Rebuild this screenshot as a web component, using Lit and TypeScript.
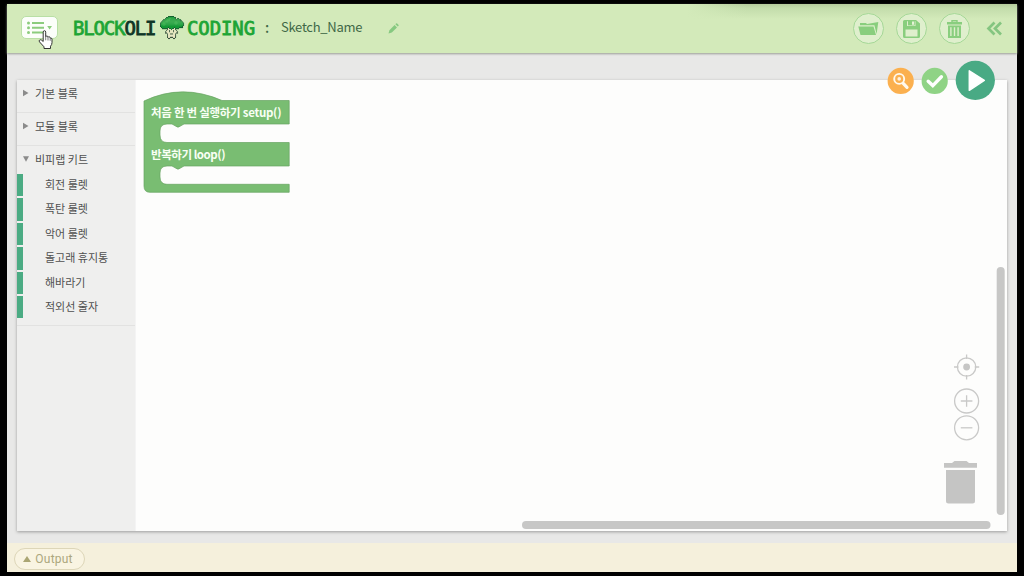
import { LitElement, html, css, svg } from "lit";
import { customElement, state } from "lit/decorators.js";

const KIT_ITEMS = ["회전 룰렛", "폭탄 룰렛", "악어 룰렛", "돌고래 휴지통", "해바라기", "적외선 줄자"];

const BROCCOLI = [
  "........dddddd..........",
  "......ddggggggdd........",
  ".....dgggGGggggd.dd.....",
  "...ddggGGGggggggdggdd...",
  "..dgggGGGGggggggggggdd..",
  ".dgggGGGgggggggGGgggggd.",
  "dggGGgggggggggGGGGgggggd",
  "dgGGGGgggggggggGGggggggd",
  "dggGGggggggggggggggggggd",
  "dgggggggggggggggggggggd.",
  ".dggggggdgggggdggggdddd.",
  "..dddddkwddgddwdddd.....",
  ".......kwwwdwwwk........",
  "......kwwkwwwkwwk.......",
  ".....kwwwkwwwkwwwk......",
  ".....kkwwwwwwwwwkk......",
  ".......kwwkkkwwk........",
  ".......kwwwwwwwk........",
  ".......kwwwwwwwk........",
  ".......kwwkkkwwk........",
  "........kk...kk.........",
];
const PIXEL: Record<string, string> = { k: "#35503c", d: "#12602f", g: "#149a36", G: "#24a942", w: "#e9e6c2" };

@customElement("app-root")
export class AppRoot extends LitElement {
  @state() private sketchName = "Sketch_Name";

  static styles = css`
    :host { display: block; width: 1024px; height: 576px; background: #000; overflow: hidden;
      font-family: "Noto Sans CJK KR", "Noto Sans", sans-serif; }
    * { box-sizing: border-box; }
    svg { display: block; flex: none; overflow: visible; }
    .frame { padding: 4px 7px; height: 576px; }
    .app { display: flex; flex-direction: column; height: 568px; background: #e8e8e7; }
    .header { display: flex; align-items: center; height: 49px; flex: none; padding: 0 14px 0 14px;
      background: linear-gradient(90deg, #d3eaba, #d3eaba00 60px) right top / 330px 16px no-repeat,
        linear-gradient(#b5cb9c, #c3dcab 4px, #d3eaba00 15px) right top / 330px 15px no-repeat, #d3eaba;
      box-shadow: 0 1px 2px #9a9d96; }
    .menu { display: flex; align-items: center; width: 37px; height: 23px; border: 1px solid #b9dfa5; border-radius: 5px;
      background: #fcfefa; margin-top: -2px; padding-left: 5px; }
    .logo { display: flex; align-items: center; margin-left: 15px; height: 24px; margin-top: -2px; }
    .word { font: 19px/24px "DejaVu Sans Mono", monospace; -webkit-text-stroke: .8px currentColor; color: #1da535; letter-spacing: -1.15px; width: 84px; white-space: nowrap; }
    .word.second { width: 68px; letter-spacing: -.1px; margin-left: 4px; }
    .mascot { margin-left: 3px; margin-right: -1px; }
    .dark { color: #0d3526; }
    .colon { font-size: 14px; color: #3f6847; margin-left: 10px; width: 16px; line-height: 20px; margin-top: -3px; font-weight: 500; }
    .name { font-size: 13px; letter-spacing: -.28px; line-height: 20px; color: #3f6847; width: 107px; margin-top: -3px; }
    .tools { display: flex; align-items: center; gap: 12px; margin-left: auto; }
    .tool { display: flex; align-items: center; justify-content: center; width: 31px; height: 31px; border-radius: 50%;
      border: 1px solid #a5d897; background: #dfefcd; }
    .collapse { margin-left: 5px; }
    .stage { position: relative; flex: 1; padding: 27px 10px 12px; }
    .panel { display: flex; height: 451px; background: #fdfdfc; box-shadow: 0 1px 3px #9c9c9c; }
    .sidebar { width: 119px; background: #efefee; color: #505050; font-size: 11px; border-right: 1px solid #f4f4f4; }
    .category { display: flex; align-items: center; height: 33px; padding: 0 0 7px 6px; gap: 6px; border-bottom: 1px solid #e2e2e1; }
    .category.open { border: 0; height: 28px; padding: 0 0 2px 6px; }
    .items { display: flex; flex-direction: column; gap: 2px; padding-bottom: 6.5px; border-bottom: 1px solid #e2e2e1; }
    .item { height: 22.4px; line-height: 20.4px; border-left: 6px solid #4bab83; padding-left: 22px; white-space: nowrap; }
    .workspace { position: relative; flex: 1; }
    .canvas { width: 871px; height: 451px; }
    .block-text { font-size: 11.5px; font-weight: 700; fill: #f8fff4; }
    .actions { position: absolute; right: 22px; top: 7px; display: flex; align-items: center; gap: 7px; }
    .output-bar { display: flex; align-items: center; height: 29px; flex: none; background: #f5f0dc; padding: 2px 0 0 7px; }
    .output { display: flex; align-items: center; justify-content: center; gap: 4px; width: 71px; height: 22px;
      border: 1px solid #ddd6b8; border-radius: 11px; background: #f9f4e2; color: #aca77e; font: 12px/20px Roboto, sans-serif; letter-spacing: .2px; padding-right: 3px; }
    .cursor { position: absolute; left: 38px; top: 29px; }
  `;

  private arrow(open = false) {
    return html`<svg width="6" height="8" viewBox="0 0 6 8"><path d=${open ? "M0 1.2H6L3 6.8Z" : "M0 .8L5.5 4L0 7.2Z"} fill="#8b8b8b"/></svg>`;
  }

  private mascot() {
    return html`<svg class="mascot" width="24" height="23" viewBox="0 0 24 21" preserveAspectRatio="none">
      ${BROCCOLI.flatMap((row, y) => [...row].map((c, x) => c === "." ? null : svg`<rect x=${x} y=${y} width="1.05" height="1.05" fill=${PIXEL[c]}></rect>`))}
    </svg>`;
  }

  private header() {
    return html`<div class="header">
      <div class="menu"><svg width="29" height="14" viewBox="0 0 29 14">
        <g fill="#8ccc7d"><circle cx="1.5" cy="2" r="1.5"/><circle cx="1.5" cy="6.8" r="1.5"/><circle cx="1.5" cy="11.6" r="1.5"/>
        <path d="M5 1H17V3H5ZM5 5.8H17V7.8H5ZM5 10.6H17V12.6H5ZM20.2 5H25L22.6 8.6Z"/></g></svg></div>
      <div class="logo"><div class="word">BLOCK<span class="dark">OLI</span></div>
        ${this.mascot()}<div class="word second">CODING</div></div>
      <div class="colon">:</div><div class="name">${this.sketchName}</div>
      <svg width="11" height="11" viewBox="0 0 11 11"><path d="M.5 10.5L1.4 7.2L6.6 2L9 4.4L3.8 9.6ZM7.4 1.2L8 .6Q8.7 0 9.4.7L10.4 1.7Q11 2.4 10.4 3L9.8 3.6Z" fill="#86c980"/></svg>
      <div class="tools">
        <div class="tool"><svg width="21" height="15" viewBox="0 0 21 15"><path d="M2 4.3V2H8L9 3L20.3 1L18.6 13L16.4 4.3ZM.3 5.5H15.5L18 14H2.5Z" fill="#89ce7e"/></svg></div>
        <div class="tool"><svg width="17" height="18" viewBox="0 0 17 18"><path fill-rule="evenodd" d="M1.5 0H13L17 3.5V16.5Q17 18 15.5 18H1.5Q0 18 0 16.5V1.5Q0 0 1.5 0ZM4 1.2V6H12.5V1.2ZM2.5 9.5V16.5H14.5V9.5Z" fill="#89ce7e"/><path d="M5 1H11.7V5.4H5Z" fill="#89ce7e"/><path d="M9 1.5H11V4.7H9Z" fill="#e5f3d7"/></svg></div>
        <div class="tool"><svg width="15" height="18" viewBox="0 0 15 18"><path d="M5 2V.7H10V2" fill="none" stroke="#89ce7e" stroke-width="1.4"/><path fill-rule="evenodd" d="M0 2H15V4.5H0ZM1 5.5H14V18H1ZM3.2 7.3V16H4.6V7.3ZM6.8 7.3V16H8.2V7.3ZM10.4 7.3V16H11.8V7.3Z" fill="#89ce7e"/></svg></div>
        <svg class="collapse" width="16" height="15" viewBox="0 0 16 15"><path d="M7.5 1.5L1.5 7.5L7.5 13.5M14 1.5L8 7.5L14 13.5" fill="none" stroke="#84c580" stroke-width="2.7"/></svg>
      </div>
    </div>`;
  }

  private canvas() {
    return html`<svg class="canvas" width="871" height="451" viewBox="136 80 871 451">
      <path d="M144 101Q182 83 222 100.5H289.2V124H184L180 126.3Q178 128 176 126.3L172 124H167Q160 124 160 131V135Q160 142.5 167 142.5H289.2V166H184L180 168.3Q178 170 176 168.3L172 166H167Q160 166 160 173V177Q160 184.3 167 184.3H289.2V192.3H150Q144 192.3 144 186V101Z" fill="#79bd72" stroke="#67a362" stroke-width=".7"/>
      <text class="block-text" x="151" y="117.4" textLength="130.5" lengthAdjust="spacing">처음 한 번 실행하기 setup()</text>
      <text class="block-text" x="151" y="159.4" textLength="74.5" lengthAdjust="spacing">반복하기 loop()</text>
      <g fill="none" stroke="#c9c9c8" stroke-width="1.3">
        <circle cx="966.6" cy="367" r="9.2"/><path d="M966.6 354.5V359M966.6 375V379.5M954 367H958.5M974.7 367H979.2"/>
        <circle cx="966.6" cy="401" r="12"/><path d="M960.8 401H972.4M966.6 395.2V406.8"/>
        <circle cx="966.6" cy="427.8" r="12"/><path d="M960.8 427.8H972.4"/>
      </g>
      <circle cx="966.6" cy="367" r="3.4" fill="#c6c6c5"/>
      <path d="M944 463H952L954.5 461H966.5L969 463H977V467.8H944ZM946 470H975V501Q975 503.5 972.5 503.5H948.5Q946 503.5 946 501Z" fill="#c5c5c4"/>
      <rect x="996.7" y="267" width="8" height="248" rx="4" fill="#c7c7c6"/>
      <rect x="522" y="521" width="468.5" height="8" rx="4" fill="#c7c7c6"/>
    </svg>`;
  }

  private actions() {
    return html`<div class="actions">
      <svg width="27" height="27" viewBox="0 0 27 27"><circle cx="13.7" cy="13.9" r="13.1" fill="#fbb04f"/><circle cx="12.2" cy="11.9" r="5" fill="none" stroke="#fff9ee" stroke-width="1.9"/><path d="M16.2 16.4L20 20.4" stroke="#fff9ee" stroke-width="3.2" stroke-linecap="round"/><circle cx="12.2" cy="11.9" r="1.8" fill="#fff1dc"/></svg>
      <svg width="27" height="27" viewBox="0 0 27 27"><circle cx="13.7" cy="13.9" r="13.1" fill="#8fd385"/><path d="M7.2 14.2L11.8 18.6L20.4 9.8" fill="none" stroke="#fff" stroke-width="3.4" stroke-linecap="round"/></svg>
      <svg width="40" height="40" viewBox="0 0 40 40"><circle cx="20.3" cy="20.3" r="19.6" fill="#49aa84"/><path d="M14.3 10.8L29.3 20.3L14.3 30.3Z" fill="#fff" stroke="#fff" stroke-width="1.5" stroke-linejoin="round"/></svg>
    </div>`;
  }

  render() {
    return html`<div class="frame"><div class="app">
        ${this.header()}
        <div class="stage">
          <div class="panel">
            <div class="sidebar">
              <div class="category">${this.arrow()}<span>기본 블록</span></div>
              <div class="category">${this.arrow()}<span>모듈 블록</span></div>
              <div class="category open">${this.arrow(true)}<span>비피랩 키트</span></div>
              <div class="items">${KIT_ITEMS.map(t => html`<div class="item">${t}</div>`)}</div>
            </div>
            <div class="workspace">${this.canvas()}</div>
          </div>
          ${this.actions()}
        </div>
        <div class="output-bar"><div class="output"><svg width="8" height="6" viewBox="0 0 8 6"><path d="M4 0L8 6H0Z" fill="#aaa573"/></svg>Output</div></div>
      </div></div>
      <svg class="cursor" width="16" height="20" viewBox="0 0 16 20"><path d="M5.2 12.5V3.2Q5.2 1.7 6.4 1.7Q7.7 1.7 7.7 3.2V7.7Q8 6.8 9 7Q10 7.1 10 8.3Q10.4 7.5 11.3 7.8Q12.2 8 12.2 9.1Q13.8 8.6 14 10.1V13.5Q14 15.7 12.5 17.2V19.5H6V17.8L1.5 12.9Q.7 11.7 1.7 11Q2.7 10.4 3.7 11.2Z" fill="#fff" stroke="#333" stroke-width="1"/><path d="M7.7 8V11.3M10 8.5V11.5M12.2 9.2V11.8" stroke="#444" stroke-width=".7"/></svg>`;
  }
}
